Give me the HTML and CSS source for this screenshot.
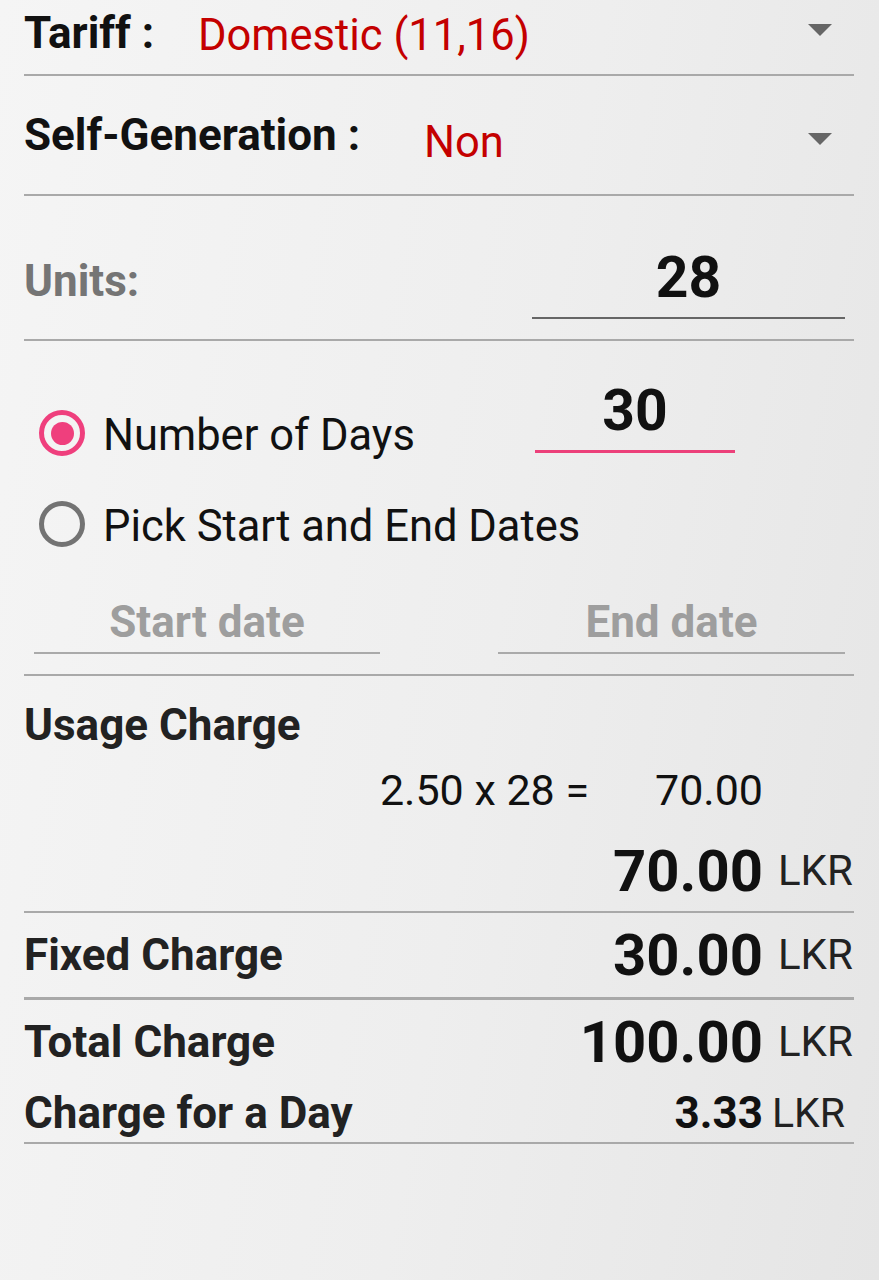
FILE: index.html
```html
<!DOCTYPE html>
<html lang="en">
<head>
  <meta charset="UTF-8">
  <title>Electricity Bill</title>
  <link rel="stylesheet" href="styles.css">
</head>
<body>

  <div class="screen">
    <div class="select-row select-row--tariff">
      <span class="select-label">Tariff :</span>
      <span class="select-value">Domestic (11,16)</span>
      <span class="caret"></span>
    </div>

    <div class="select-row select-row--gen">
      <span class="select-label">Self-Generation :</span>
      <span class="select-value">Non</span>
      <span class="caret"></span>
    </div>

    <div class="units-row">
      <span class="units-label">Units:</span>
      <div class="units-field">28</div>
    </div>

    <div class="days">
      <div class="days-line">
        <div class="option">
          <span class="radio radio--on"></span>
          <span class="option-text">Number of Days</span>
        </div>
        <div class="days-field">30</div>
      </div>

      <div class="option option--second">
        <span class="radio"></span>
        <span class="option-text">Pick Start and End Dates</span>
      </div>

      <div class="dates">
        <div class="date-field">Start date</div>
        <div class="date-field date-field--end">End date</div>
      </div>
    </div>

    <div class="usage">
      <div class="usage-title">Usage Charge</div>
      <div class="calc-line">
        <span class="calc-formula">2.50 x 28 =</span>
        <span class="calc-value">70.00</span>
      </div>
      <div class="amount-line">
        <span class="amount">70.00</span>
        <span class="unit">LKR</span>
      </div>
    </div>

    <div class="charge-row charge-row--fixed">
      <span class="charge-label">Fixed Charge</span>
      <span class="amount">30.00</span>
      <span class="unit">LKR</span>
    </div>

    <div class="charge-row charge-row--total">
      <span class="charge-label">Total Charge</span>
      <span class="amount">100.00</span>
      <span class="unit">LKR</span>
    </div>

    <div class="charge-row charge-row--day">
      <span class="charge-label">Charge for a Day</span>
      <span class="amount amount--small">3.33</span>
      <span class="unit unit--day">LKR</span>
    </div>
  </div>

</body>
</html>
```

FILE: styles.css
```css
body {
  margin: 0;
  min-height: 1280px;
  font-family: Roboto, "Noto Sans", sans-serif;
  color: #111;
  background: linear-gradient(100deg, #f5f5f5 0%, #eeeeee 55%, #e5e5e5 100%);
}

.screen {
  padding: 0 25px 0 24px;
}

/* dropdown rows */
.select-row {
  display: flex;
  align-items: flex-start;
  box-sizing: border-box;
  border-bottom: 2px solid #a9a9a9;
}

.select-row--tariff {
  height: 76px;
}

.select-row--gen {
  height: 120px;
}

.select-label {
  flex: none;
  font-size: 44px;
  line-height: 44px;
  font-weight: 700;
  color: #111;
}

.select-value {
  font-size: 43.5px;
  line-height: 43px;
  color: #c40000;
}

.caret {
  margin-left: auto;
  margin-right: 22px;
  width: 0;
  height: 0;
  border-left: 12px solid transparent;
  border-right: 12px solid transparent;
  border-top: 12px solid #666;
}

.select-row--tariff .select-label { width: 174px; margin-top: 11px; }
.select-row--tariff .select-value { margin-top: 14px; }
.select-row--tariff .caret { margin-top: 24px; }

.select-row--gen .select-label { width: 400px; margin-top: 37px; }
.select-row--gen .select-value { margin-top: 45px; }
.select-row--gen .caret { margin-top: 57px; }

/* units */
.units-row {
  display: flex;
  align-items: flex-start;
  height: 145px;
  box-sizing: border-box;
  border-bottom: 2px solid #a9a9a9;
}

.units-label {
  margin-top: 63px;
  font-size: 44px;
  line-height: 45px;
  font-weight: 700;
  color: #757575;
}

.units-field {
  width: 313px;
  margin: 53px 9px 0 auto;
  padding-bottom: 11px;
  border-bottom: 2px solid #666;
  font-size: 57px;
  line-height: 57px;
  font-weight: 700;
  text-align: center;
}

/* number of days */
.days {
  height: 335px;
  box-sizing: border-box;
  padding: 41px 9px 0 10px;
  border-bottom: 2px solid #a9a9a9;
}

.days-line {
  display: flex;
  align-items: flex-start;
}

.option {
  display: flex;
  align-items: flex-start;
  height: 48px;
  padding-left: 5px;
}

.days-line .option {
  width: 496px;
  margin-top: 27px;
}

.option--second {
  margin-top: 43px;
}

.radio {
  flex: none;
  width: 46px;
  height: 46px;
  margin: 1px 18px 0 0;
  box-sizing: border-box;
  border: 5px solid #737373;
  border-radius: 50%;
  display: flex;
  align-items: center;
  justify-content: center;
}

.radio--on {
  border-color: #ef3f7d;
}

.radio--on::after {
  content: "";
  width: 23px;
  height: 23px;
  border-radius: 50%;
  background: #ef3f7d;
}

.option-text {
  margin-top: 3px;
  font-size: 43.5px;
  line-height: 48px;
  color: #111;
  white-space: nowrap;
}

.days-field {
  width: 200px;
  padding-bottom: 11px;
  border-bottom: 3px solid #ec407a;
  font-size: 57px;
  line-height: 57px;
  font-weight: 700;
  text-align: center;
}

.dates {
  display: flex;
  margin-top: 52px;
}

.date-field {
  width: 346px;
  padding-bottom: 8px;
  border-bottom: 2px solid #aaa;
  font-size: 44px;
  line-height: 44px;
  font-weight: 700;
  color: #9e9e9e;
  text-align: center;
}

.date-field--end {
  width: 347px;
  margin-left: auto;
}

/* charges */
.usage {
  height: 237px;
  box-sizing: border-box;
  padding-top: 27px;
  border-bottom: 2px solid #a9a9a9;
}

.usage-title,
.charge-label {
  font-size: 44px;
  line-height: 44px;
  font-weight: 700;
  color: #222;
}

.calc-line {
  display: flex;
  justify-content: flex-end;
  margin-top: 22px;
  padding-right: 91px;
  font-size: 43px;
  line-height: 42px;
  color: #111;
}

.calc-value {
  margin-left: 66px;
}

.amount-line {
  display: flex;
  justify-content: flex-end;
  align-items: center;
  margin-top: 31px;
}

.amount {
  font-size: 58px;
  line-height: 58px;
  font-weight: 700;
  color: #111;
}

.amount--small {
  font-size: 44px;
  line-height: 44px;
}

.unit {
  width: 91px;
  box-sizing: border-box;
  padding-left: 15px;
  font-size: 42px;
  line-height: 42px;
  color: #222;
}

.unit--day {
  padding-left: 9px;
  font-size: 41px;
}

.charge-row {
  display: flex;
  align-items: center;
  box-sizing: border-box;
}

.charge-label {
  flex: 1;
}

.charge-row--fixed {
  height: 87px;
  border-bottom: 3px solid #a9a9a9;
}

.charge-row--total {
  height: 84px;
}

.charge-row--day {
  height: 60px;
  border-bottom: 2px solid #a9a9a9;
}
```
